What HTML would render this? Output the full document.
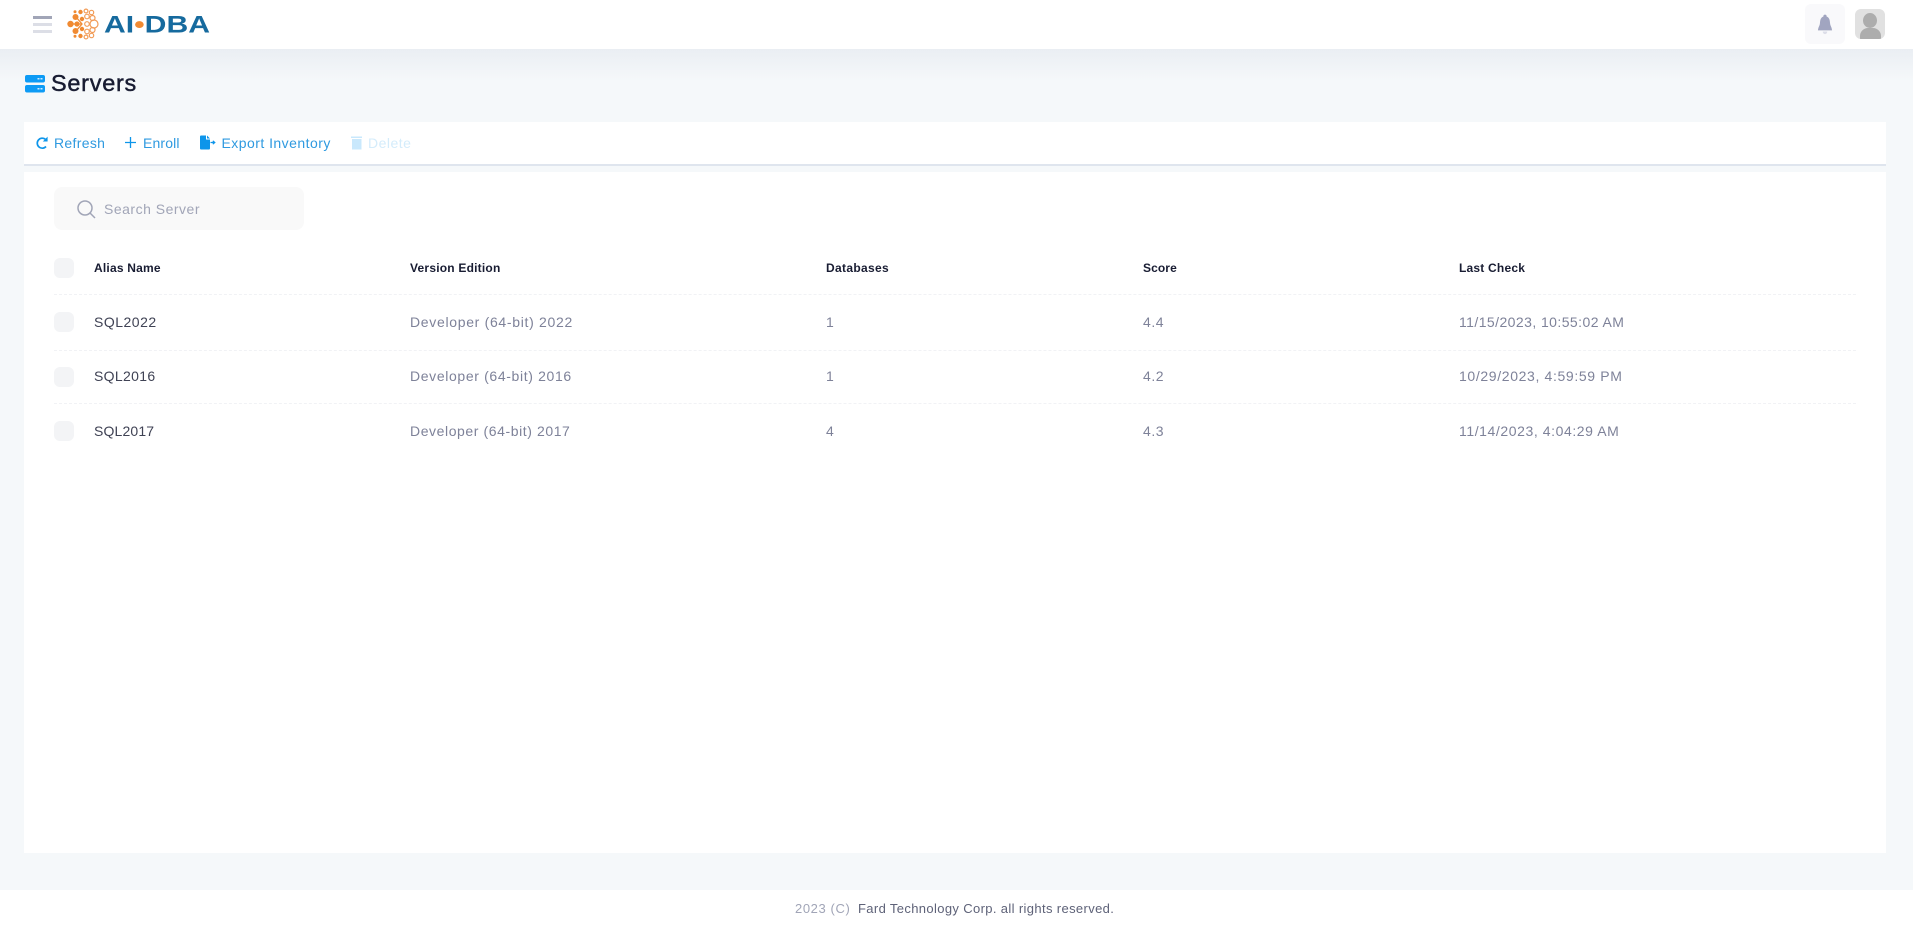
<!DOCTYPE html>
<html lang="en"><head><meta charset="utf-8"><title>Servers</title>
<style>
html,body{margin:0;padding:0;width:1913px;height:928px;overflow:hidden;background:#f5f8fa;font-family:"Liberation Sans",sans-serif}
.a{position:absolute;white-space:nowrap;line-height:20px}
svg{position:absolute;display:block}
.h{font-size:12px;font-weight:bold;color:#181c32;letter-spacing:.21px}
.n{font-size:14px;color:#3f4254;letter-spacing:.5px}
.c{font-size:14px;color:#7e8299;letter-spacing:.53px}
.t{font-size:14px;color:#2f9ae0;letter-spacing:.4px}
.cb{position:absolute;left:54px;width:20px;height:20px;border-radius:6px;background:#f3f4f6}
.sep{position:absolute;left:54px;width:1802px;border-top:1px dashed #f1f2f5}
</style></head>
<body>
<div style="position:absolute;left:0;top:49px;width:1913px;height:32px;background:linear-gradient(#eaeef3,#f5f8fa)"></div>
<div style="position:absolute;left:0;top:0;width:1913px;height:49px;background:#fff"></div>
<div style="position:absolute;left:33px;top:16px;width:19px;height:3px;background:#a1a5b7"></div>
<div style="position:absolute;left:33px;top:23px;width:19px;height:3px;background:#dcdee6"></div>
<div style="position:absolute;left:33px;top:30px;width:19px;height:3px;background:#dcdee6"></div>
<svg style="left:67px;top:8px" width="33" height="32" viewBox="0 0 33 32">
<g fill="#f08a32"><circle cx="3.500" cy="16" r="3.200"/><circle cx="8.500" cy="9" r="3"/><circle cx="8.500" cy="23" r="3"/><circle cx="10" cy="16" r="2.600"/><circle cx="8" cy="3.800" r="1.500"/><circle cx="8" cy="28.200" r="1.500"/><circle cx="13.500" cy="4" r="2.200"/><circle cx="13.500" cy="28" r="2.200"/><circle cx="15" cy="11" r="2.200"/><circle cx="15" cy="21" r="2.200"/></g>
<path d="M3 16H14M9 9L15 16L9 23" stroke="#f08a32" stroke-width="1.300" fill="none"/>
<g fill="none" stroke="#f29c58" stroke-width="1.200"><circle cx="19" cy="3" r="1.900"/><circle cx="19" cy="29" r="1.900"/><circle cx="20" cy="8.500" r="2.300"/><circle cx="20" cy="23.500" r="2.300"/><circle cx="24.500" cy="4.500" r="2.200"/><circle cx="24.500" cy="27.500" r="2.200"/><circle cx="25.500" cy="10" r="2.500"/><circle cx="25.500" cy="22" r="2.500"/><circle cx="27" cy="16" r="4"/><circle cx="20" cy="16" r="2.300"/></g></svg>
<svg style="left:103px;top:12px" width="110" height="24" viewBox="0 0 110 24"><text x="1" y="20.500" font-family="Liberation Sans" font-weight="bold" font-size="24" fill="#166a9e" textLength="106" lengthAdjust="spacingAndGlyphs">AI<tspan fill="#f08a32">•</tspan>DBA</text></svg>
<div style="position:absolute;left:1805px;top:4px;width:40px;height:40px;border-radius:6px;background:#f9f9fb"></div>
<svg style="left:1816px;top:13px" width="18" height="23" viewBox="0 0 16 20.500"><path fill="#a1a5c0" d="M8 1.500c1 0 1.500.6 1.500 1.700C12 4 12.300 6.500 12.500 9c.2 2.500 1.500 3.300 1.800 6.500H1.700C2 12.300 3.300 11.500 3.500 9c.2-2.500.5-5 3-5.800C6.500 2.100 7 1.500 8 1.500z"/><path fill="#dcdde8" d="M6 16.500h4c0 1.500-1 2.300-2 2.300s-2-.8-2-2.300z"/></svg>
<div style="position:absolute;left:1855px;top:9px;width:30px;height:30px;border-radius:6px;overflow:hidden;background:#e1e1e1">
<div style="position:absolute;left:8px;top:4px;width:14px;height:15px;border-radius:50%;background:#adadad"></div>
<div style="position:absolute;left:5px;top:19px;width:21px;height:14px;border-radius:8px 8px 0 0;background:#adadad"></div></div>

<svg style="left:25px;top:74px" width="21" height="19" viewBox="0 0 21 19"><rect x="0" y="1" width="20" height="7.500" rx="2" fill="#0d9bf5"/><rect x="0" y="11" width="20" height="7.500" rx="2" fill="#0d9bf5"/><g fill="#cfeafd"><rect x="12.500" y="4" width="2" height="1.500"/><rect x="15.500" y="4" width="2" height="1.500"/><rect x="12.500" y="14" width="2" height="1.500"/><rect x="15.500" y="14" width="2" height="1.500"/></g></svg>
<div class="a" style="left:51px;top:68px;font-size:23.500px;line-height:30px;color:#181c32;letter-spacing:.72px;-webkit-text-stroke:.45px #181c32">Servers</div>

<div style="position:absolute;left:24px;top:122px;width:1862px;height:42px;background:#fff;border-bottom:2px solid #dfe5ee"></div>
<svg style="left:35px;top:136px" width="14" height="14" viewBox="0 0 14 14"><path d="M11 10.500A5 5 0 1 1 10.300 3.200" fill="none" stroke="#0d95ea" stroke-width="1.700"/><path d="M12.600 .6V5.500H7.800z" fill="#0d95ea"/></svg>
<div class="a t" style="left:54px;top:133px;letter-spacing:.32px">Refresh</div>
<svg style="left:124px;top:136px" width="13" height="13" viewBox="0 0 13 13"><path d="M6.500 1V12M1 6.500H12" stroke="#0d95ea" stroke-width="1.300"/></svg>
<div class="a t" style="left:143px;top:133px;letter-spacing:.15px">Enroll</div>
<svg style="left:199px;top:135px" width="17" height="15" viewBox="0 0 17 15"><path d="M1 1.500Q1 .5 2 .5H7V4.500H11V13.500Q11 14.500 10 14.500H2Q1 14.500 1 13.500z" fill="#0d95ea"/><path d="M8 .5L11 3.500H8z" fill="#0d95ea"/><path d="M11.500 7.500H15.500M13.800 5.800L15.800 7.500L13.800 9.200" fill="none" stroke="#0d95ea" stroke-width="1.200"/></svg>
<div class="a t" style="left:221.500px;top:133px;letter-spacing:.46px">Export Inventory</div>
<svg style="left:351px;top:135px" width="12" height="15" viewBox="0 0 12 15"><path d="M0 1.500H11V3H0z M1 4H10.500V14.500H1z" fill="#c9e8fc"/></svg>
<div class="a t" style="left:368px;top:133px;color:#d4ecfb;letter-spacing:.5px">Delete</div>

<div style="position:absolute;left:24px;top:172px;width:1862px;height:681px;background:#fff"></div>
<div style="position:absolute;left:54px;top:187px;width:250px;height:43px;border-radius:8px;background:#f9f9f9"></div>
<svg style="left:75px;top:198px" width="22" height="22" viewBox="0 0 22 22"><circle cx="10" cy="10" r="7" fill="none" stroke="#a1a5b7" stroke-width="1.500"/><path d="M15 15L20 20" stroke="#a1a5b7" stroke-width="1.500"/></svg>
<div class="a" style="left:104px;top:199px;font-size:14px;color:#a1a5b7;letter-spacing:.5px">Search Server</div>

<div class="cb" style="top:258px"></div>
<div class="a h" style="left:94px;top:258px">Alias Name</div>
<div class="a h" style="left:410px;top:258px">Version Edition</div>
<div class="a h" style="left:826px;top:258px;letter-spacing:.33px">Databases</div>
<div class="a h" style="left:1143px;top:258px;letter-spacing:.1px">Score</div>
<div class="a h" style="left:1459px;top:258px">Last Check</div>
<div class="sep" style="top:294px"></div>

<div class="cb" style="top:312px"></div>
<div class="a n" style="left:94px;top:312px">SQL2022</div>
<div class="a c" style="left:410px;top:312px;letter-spacing:.69px">Developer (64-bit) 2022</div>
<div class="a c" style="left:826px;top:312px">1</div>
<div class="a c" style="left:1143px;top:312px">4.4</div>
<div class="a c" style="left:1459px;top:312px;letter-spacing:.43px">11/15/2023, 10:55:02 AM</div>
<div class="sep" style="top:350px"></div>

<div class="cb" style="top:367px"></div>
<div class="a n" style="left:94px;top:366px;letter-spacing:.33px">SQL2016</div>
<div class="a c" style="left:410px;top:366px;letter-spacing:.64px">Developer (64-bit) 2016</div>
<div class="a c" style="left:826px;top:366px">1</div>
<div class="a c" style="left:1143px;top:366px">4.2</div>
<div class="a c" style="left:1459px;top:366px;letter-spacing:.64px">10/29/2023, 4:59:59 PM</div>
<div class="sep" style="top:403px"></div>

<div class="cb" style="top:421px"></div>
<div class="a n" style="left:94px;top:421px;letter-spacing:.15px">SQL2017</div>
<div class="a c" style="left:410px;top:421px;letter-spacing:.58px">Developer (64-bit) 2017</div>
<div class="a c" style="left:826px;top:421px">4</div>
<div class="a c" style="left:1143px;top:421px">4.3</div>
<div class="a c" style="left:1459px;top:421px;letter-spacing:.58px">11/14/2023, 4:04:29 AM</div>

<div style="position:absolute;left:0;top:890px;width:1913px;height:38px;background:#fff"></div>
<div class="a" style="left:795px;top:899px;font-size:13px;color:#a1a5b7;letter-spacing:.6px">2023 (C)</div>
<div class="a" style="left:858px;top:899px;font-size:13px;color:#5e6278;letter-spacing:.36px">Fard Technology Corp. all rights reserved.</div>
</body></html>
